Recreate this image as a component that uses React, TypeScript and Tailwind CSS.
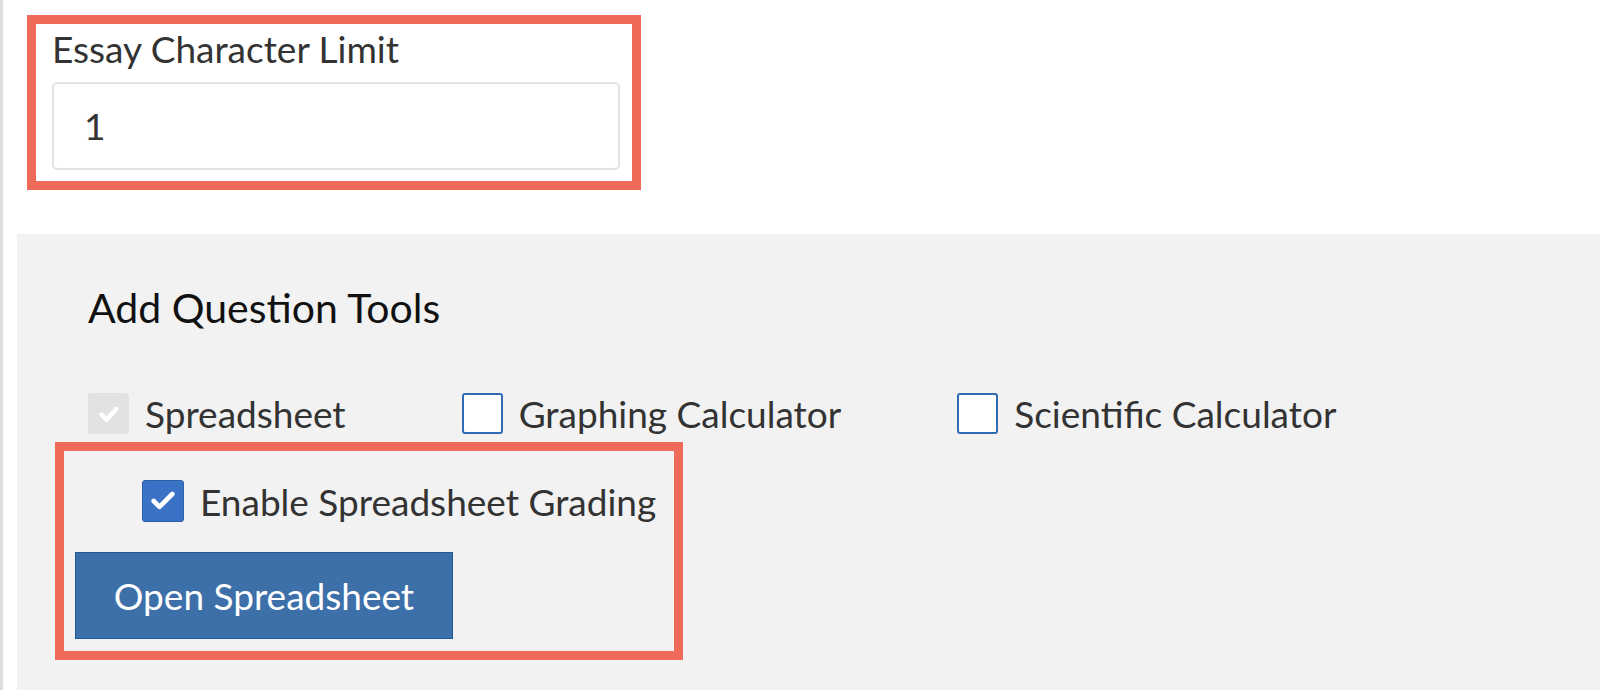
import { Check } from "lucide-react";

function Tick({ className }: { className?: string }) {
  return (
    <svg viewBox="0 0 24 24" className={className} fill="none" stroke="currentColor" strokeWidth={3.8} strokeLinecap="round" strokeLinejoin="round">
      <polyline points="5.5 12.5 10 17 18.5 7.5" />
    </svg>
  );
}

function ToolOption({ label, state }: { label: string; state: "disabled" | "off" }) {
  return (
    <label className="flex items-center gap-4">
      {state === "disabled" ? (
        <span className="flex h-[41px] w-[41px] items-center justify-center rounded-[3px] bg-[#e2e2e2] text-white">
          <Tick className="h-7 w-7" />
        </span>
      ) : (
        <span className="h-[41px] w-[41px] rounded-[3px] border-2 border-[#2f6cb3] bg-white" />
      )}
      <span className="text-[37px] leading-none text-[#333]">{label}</span>
    </label>
  );
}

export default function App() {
  return (
    <div
      className="h-[690px] w-[1600px] overflow-hidden border-l-[3px] border-[#dedede] bg-white"
      style={{ fontFamily: "Lato, 'Open Sans', sans-serif" }}
    >
      <div className="ml-[24px] mt-[15px] h-[175px] w-[614px] border-[9px] border-[#ee6b5a] pl-[16px] pr-[12px] pt-[7px]">
        <div className="text-[37px] leading-[36px] text-[#333]">Essay Character Limit</div>
        <div className="mt-[15px] flex h-[88px] items-center rounded-[5px] border-2 border-[#e3e3e3] bg-white pl-[30px] text-[37px] text-[#333]">
          1
        </div>
      </div>

      <div className="ml-[14px] mt-[44px] h-[460px] bg-[#f1f2f1]">
        <div className="pl-[71px] pt-[53px]">
          <h2 className="text-[41px] leading-[42px] text-[#111]">Add Question Tools</h2>
          <div className="mt-[64px] flex items-center gap-[116px]">
            <ToolOption label="Spreadsheet" state="disabled" />
            <ToolOption label="Graphing Calculator" state="off" />
            <ToolOption label="Scientific Calculator" state="off" />
          </div>
        </div>

        <div className="ml-[38px] mt-[8px] h-[218px] w-[628px] border-[9px] border-[#ee6b5a] pl-[11px] pt-[29px]">
          <label className="ml-[67px] flex items-center gap-4">
            <span className="flex h-[42px] w-[42px] items-center justify-center rounded-[3px] border border-[#2b5fa6] bg-[#3a72c6] text-white">
              <Check className="h-7 w-7" strokeWidth={4} />
            </span>
            <span className="text-[37px] leading-none text-[#333]">Enable Spreadsheet Grading</span>
          </label>
          <button
            type="button"
            className="mt-[30px] flex h-[87px] w-[378px] items-center justify-center border border-[#1f5a9c] bg-[#3d6fa8] text-[37px] text-white"
          >
            Open Spreadsheet
          </button>
        </div>
      </div>
    </div>
  );
}
